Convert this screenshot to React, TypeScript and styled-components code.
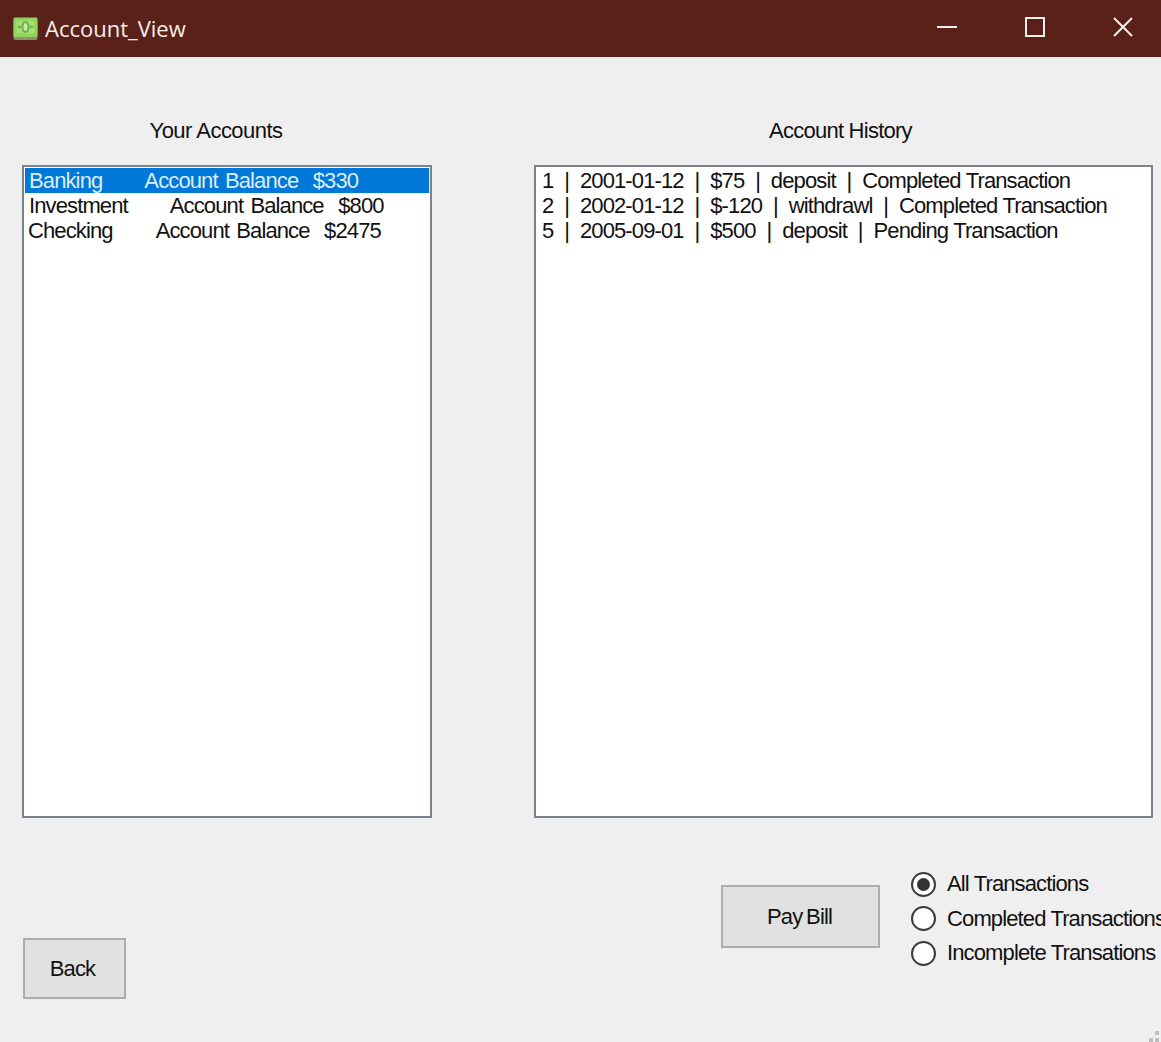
import React, { useState } from "react";
import styled, { createGlobalStyle } from "styled-components";

const GlobalStyle = createGlobalStyle`
  html, body {
    margin: 0;
    padding: 0;
    background-color: #efefef;
  }
  body {
    font-family: "Liberation Sans", Arial, sans-serif;
    color: #111;
  }
`;

const Window = styled.div`
  position: relative;
  width: 1161px;
  height: 1042px;
  overflow: hidden;
  background-color: #efefef;
`;

const TitleBar = styled.div`
  height: 57px;
  display: flex;
  align-items: center;
  gap: 48px;
  padding-right: 18px;
  background-color: #5a2119;
  color: #f6eeec;
`;

const TitleGroup = styled.div`
  flex: 1;
  display: flex;
  align-items: center;
`;

const AppIcon = styled.svg`
  width: 25px;
  height: 23px;
  margin-left: 13px;
  margin-right: 7px;
`;

const TitleText = styled.span`
  font-family: "Open Sans", "Noto Sans", sans-serif;
  font-size: 22px;
  line-height: 57px;
`;

const WindowButton = styled.button`
  width: 40px;
  height: 53px;
  align-self: flex-start;
  padding: 0;
  border: 0;
  display: flex;
  align-items: center;
  justify-content: center;
  background-color: transparent;
  color: #f6eeec;
`;

const Panels = styled.div`
  display: flex;
  gap: 102px;
  padding: 62px 0 0 22px;
`;

const Panel = styled.section<{ $width: number }>`
  width: ${(props) => props.$width}px;
`;

const PanelLabel = styled.div<{ $indent: number; $spacing: number }>`
  height: 46px;
  padding-left: ${(props) => props.$indent}px;
  font-size: 22px;
  line-height: 24px;
  letter-spacing: ${(props) => props.$spacing}px;
`;

const ListBox = styled.div`
  box-sizing: border-box;
  height: 653px;
  padding: 1px;
  border: 2px solid #7d828e;
  background-color: #fff;
`;

const ListRow = styled.div<{ $selected?: boolean; $indent?: number; $wordGap: number }>`
  height: 25px;
  padding-left: ${(props) => props.$indent ?? 3}px;
  font-size: 22px;
  line-height: 25px;
  letter-spacing: -0.88px;
  word-spacing: ${(props) => props.$wordGap}px;
  white-space: pre;
  color: ${(props) => (props.$selected ? "#dcecfa" : "#111")};
  background-color: ${(props) => (props.$selected ? "#0078d7" : "transparent")};
`;

const AccountDetail = styled.span<{ $gap: number }>`
  margin-left: ${(props) => props.$gap}px;
`;

const BottomArea = styled.div`
  display: grid;
  grid-template-columns: 698px 159px auto;
  padding: 50px 0 0 23px;
`;

const PushButton = styled.button<{ $width: number; $height: number; $top: number; $shift?: number }>`
  box-sizing: border-box;
  width: ${(props) => props.$width}px;
  height: ${(props) => props.$height}px;
  margin-top: ${(props) => props.$top}px;
  padding: 0 ${(props) => props.$shift ?? 0}px 0 0;
  border: 2px solid #adadad;
  background-color: #e1e1e1;
  color: #111;
  font-family: "Liberation Sans", Arial, sans-serif;
  font-size: 22px;
  letter-spacing: -0.85px;
  word-spacing: -1.5px;
`;

const RadioGroup = styled.div`
  display: flex;
  flex-direction: column;
  gap: 10.5px;
  margin-left: 31px;
  margin-top: 4px;
`;

const RadioRow = styled.label`
  display: flex;
  align-items: center;
  height: 24px;
  font-size: 22px;
  letter-spacing: -0.87px;
  white-space: nowrap;
`;

const RadioCircle = styled.span<{ $checked?: boolean }>`
  box-sizing: border-box;
  flex: none;
  width: 25px;
  height: 25px;
  margin-right: 11px;
  border: 2px solid #3b3b3b;
  border-radius: 50%;
  background-color: #fff;
  display: flex;
  align-items: center;
  justify-content: center;

  &::after {
    content: "";
    width: 13px;
    height: 13px;
    border-radius: 50%;
    background-color: ${(props) => (props.$checked ? "#333" : "transparent")};
  }
`;

const SizeGrip = styled.svg`
  position: absolute;
  right: 2px;
  bottom: 0;
  width: 10px;
  height: 11px;
`;

const accounts = [
  { name: "Banking", detail: "Account Balance  $330", indent: 4, gap: 42 },
  { name: "Investment", detail: "Account Balance  $800", indent: 4, gap: 42 },
  { name: "Checking", detail: "Account Balance  $2475", indent: 3, gap: 43 },
];

const history = [
  "1  |  2001-01-12  |  $75  |  deposit  |  Completed Transaction",
  "2  |  2002-01-12  |  $-120  |  withdrawl  |  Completed Transaction",
  "5  |  2005-09-01  |  $500  |  deposit  |  Pending Transaction",
];

const filters = ["All Transactions", "Completed Transactions", "Incomplete Transations"];

export default function App() {
  const [selectedAccount, setSelectedAccount] = useState(0);
  const [filter, setFilter] = useState(0);

  return (
    <Window>
      <GlobalStyle />
      <TitleBar>
        <TitleGroup>
          <AppIcon viewBox="0 0 25 23">
            <rect x="0.5" y="2" width="24" height="21" rx="2" fill="#8a9468" />
            <rect x="0.5" y="0.5" width="24" height="19.5" rx="1.5" fill="#8fd45f" />
            <rect x="3.5" y="3.5" width="18" height="13" fill="#a4e06f" />
            <ellipse cx="12.5" cy="10" rx="4" ry="6" fill="#6fa94c" />
            <ellipse cx="12.5" cy="10" rx="2" ry="4" fill="#c4ec9e" />
            <circle cx="6.5" cy="10" r="1.4" fill="#6fa94c" />
            <circle cx="18.5" cy="10" r="1.4" fill="#6fa94c" />
          </AppIcon>
          <TitleText>Account_View</TitleText>
        </TitleGroup>
        <WindowButton aria-label="Minimize">
          <svg width="20" height="2" viewBox="0 0 20 2">
            <rect width="20" height="2" fill="currentColor" />
          </svg>
        </WindowButton>
        <WindowButton aria-label="Maximize">
          <svg width="20" height="20" viewBox="0 0 20 20">
            <rect x="1" y="1" width="18" height="18" fill="none" stroke="currentColor" strokeWidth="2" />
          </svg>
        </WindowButton>
        <WindowButton aria-label="Close">
          <svg width="20" height="20" viewBox="0 0 20 20">
            <path d="M1 1 L19 19 M19 1 L1 19" stroke="currentColor" strokeWidth="2" />
          </svg>
        </WindowButton>
      </TitleBar>

      <Panels>
        <Panel $width={410}>
          <PanelLabel $indent={127.5} $spacing={-0.52}>
            Your Accounts
          </PanelLabel>
          <ListBox>
            {accounts.map((account, index) => (
              <ListRow
                key={account.name}
                $indent={account.indent}
                $wordGap={2}
                $selected={index === selectedAccount}
                onClick={() => setSelectedAccount(index)}
              >
                {account.name}
                <AccountDetail $gap={account.gap}>{account.detail}</AccountDetail>
              </ListRow>
            ))}
          </ListBox>
        </Panel>
        <Panel $width={619}>
          <PanelLabel $indent={235} $spacing={-0.75}>
            Account History
          </PanelLabel>
          <ListBox>
            {history.map((row) => (
              <ListRow key={row} $indent={5} $wordGap={0.2}>
                {row}
              </ListRow>
            ))}
          </ListBox>
        </Panel>
      </Panels>

      <BottomArea>
        <PushButton $width={103} $height={61} $top={70} $shift={4}>
          Back
        </PushButton>
        <PushButton $width={159} $height={63} $top={17} $shift={2}>
          Pay Bill
        </PushButton>
        <RadioGroup>
          {filters.map((label, index) => (
            <RadioRow key={label} onClick={() => setFilter(index)}>
              <RadioCircle $checked={index === filter} />
              {label}
            </RadioRow>
          ))}
        </RadioGroup>
      </BottomArea>

      <SizeGrip viewBox="0 0 10 11">
        <rect x="6" y="0" width="4" height="4" fill="#bdbdbd" />
        <rect x="0" y="7" width="4" height="4" fill="#bdbdbd" />
        <rect x="6" y="7" width="4" height="4" fill="#bdbdbd" />
      </SizeGrip>
    </Window>
  );
}
